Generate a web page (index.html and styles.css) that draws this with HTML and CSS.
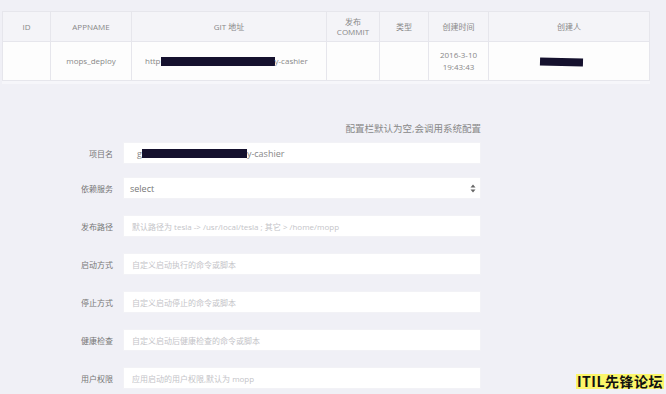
FILE: index.html
```html
<!DOCTYPE html>
<html lang="zh-CN">
<head>
    <meta charset="UTF-8">
    <title>发布配置</title>
    <link rel="stylesheet" href="styles.css">
</head>
<body>

<!-- App table -->
<table class="app-table">
    <thead>
        <tr>
            <th class="col-id">ID</th>
            <th class="col-name">APPNAME</th>
            <th class="col-git">GIT 地址</th>
            <th class="col-commit">发布<br>COMMIT</th>
            <th class="col-type">类型</th>
            <th class="col-time">创建时间</th>
            <th class="col-user">创建人</th>
        </tr>
    </thead>
    <tbody>
        <tr>
            <td></td>
            <td>mops_deploy</td>
            <td class="git-cell">http<span class="redact redact-git"></span>y-cashier</td>
            <td></td>
            <td></td>
            <td>2016-3-10<br>19:43:43</td>
            <td><span class="redact redact-user"></span></td>
        </tr>
    </tbody>
</table>
<div class="table-foot"></div>

<!-- Config form -->
<div class="config-form">
    <div class="form-note">配置栏默认为空,会调用系统配置</div>

    <div class="form-row form-row-tight">
        <label>项目名</label>
        <div class="field field-value">g<span class="redact redact-name"></span>y-cashier</div>
    </div>
    <div class="form-row">
        <label>依赖服务</label>
        <div class="field field-select">
            <span>select</span>
            <svg width="6" height="9" viewBox="0 0 6 9"><path d="M3 0.5L5.5 3.5H0.5Z M3 8.5L5.5 5.5H0.5Z" fill="#666"/></svg>
        </div>
    </div>
    <div class="form-row">
        <label>发布路径</label>
        <input class="field" type="text" placeholder="默认路径为 tesla -> /usr/local/tesla ; 其它 > /home/mopp">
    </div>
    <div class="form-row">
        <label>启动方式</label>
        <input class="field" type="text" placeholder="自定义启动执行的命令或脚本">
    </div>
    <div class="form-row">
        <label>停止方式</label>
        <input class="field" type="text" placeholder="自定义启动停止的命令或脚本">
    </div>
    <div class="form-row">
        <label>健康检查</label>
        <input class="field" type="text" placeholder="自定义启动后健康检查的命令或脚本">
    </div>
    <div class="form-row">
        <label>用户权限</label>
        <input class="field" type="text" placeholder="应用启动的用户权限,默认为 mopp">
    </div>
</div>

<div class="watermark">ITIL先锋论坛</div>

</body>
</html>
```

FILE: styles.css
```css
* {
    margin: 0;
    padding: 0;
    box-sizing: border-box;
    font-family: 'Open Sans', 'Noto Sans CJK SC', sans-serif;
}

body {
    background-color: #f0f0f6;
    color: #777;
    width: 666px;
    height: 394px;
    overflow: hidden;
    position: relative;
}

.app-table {
    margin: 11px 0 0 2px;
    width: 648px;
    border-collapse: collapse;
    font-size: 8px;
    table-layout: fixed;
}

.app-table th,
.app-table td {
    border: 1px solid #e6e6ec;
    text-align: center;
    font-weight: normal;
    color: #888;
}

.app-table th {
    height: 30px;
    background-color: #f4f4f8;
    line-height: 10px;
}

.app-table td {
    height: 39px;
    background-color: #fdfdfd;
    line-height: 12px;
}

.col-id { width: 48px; }
.col-name { width: 81px; }
.col-git { width: 195px; }
.col-commit { width: 53px; }
.col-type { width: 49px; }
.col-time { width: 60px; }

.app-table .git-cell {
    text-align: left;
    padding-left: 13px;
}

.redact {
    display: inline-block;
    background-color: #15112e;
    vertical-align: middle;
}

.redact-git {
    width: 114px;
    height: 9px;
}

.redact-user {
    width: 43px;
    height: 8px;
    margin-right: 16px;
    transform: rotate(1.5deg);
}

.redact-name {
    width: 105px;
    height: 9px;
}

.table-foot {
    margin-left: 2px;
    width: 648px;
    height: 3px;
    background-color: #f6f6fa;
}

.config-form {
    width: 421px;
    margin: 37px 0 0 60px;
    display: flex;
    flex-direction: column;
}

.form-note {
    text-align: right;
    font-size: 9.5px;
    color: #888;
    margin-bottom: 7px;
}

.form-row {
    display: flex;
    align-items: center;
    gap: 10px;
    margin-bottom: 16px;
}

.form-row-tight {
    margin-bottom: 13px;
}

.form-row label {
    width: 53px;
    text-align: right;
    font-size: 8px;
    color: #777;
}

.field {
    flex: 1;
    height: 22px;
    border: 1px solid #f2f2f6;
    background-color: #fff;
    padding: 0 8px;
    font-size: 8px;
    color: #888;
    outline: none;
    display: flex;
    align-items: center;
}

.field::placeholder {
    color: #c4c4c8;
}

.field-value {
    padding-left: 13px;
    font-size: 9px;
}

.field-select {
    justify-content: space-between;
    padding: 0 4px 0 6px;
    font-size: 9px;
    color: #777;
}

.watermark {
    position: absolute;
    right: 2px;
    bottom: 5px;
    font-family: 'Noto Sans CJK SC', sans-serif;
    font-weight: bold;
    font-size: 14px;
    letter-spacing: 0.5px;
    color: #111;
    background-color: #fbf66a;
    line-height: 15px;
    padding: 0 1px;
}
```
